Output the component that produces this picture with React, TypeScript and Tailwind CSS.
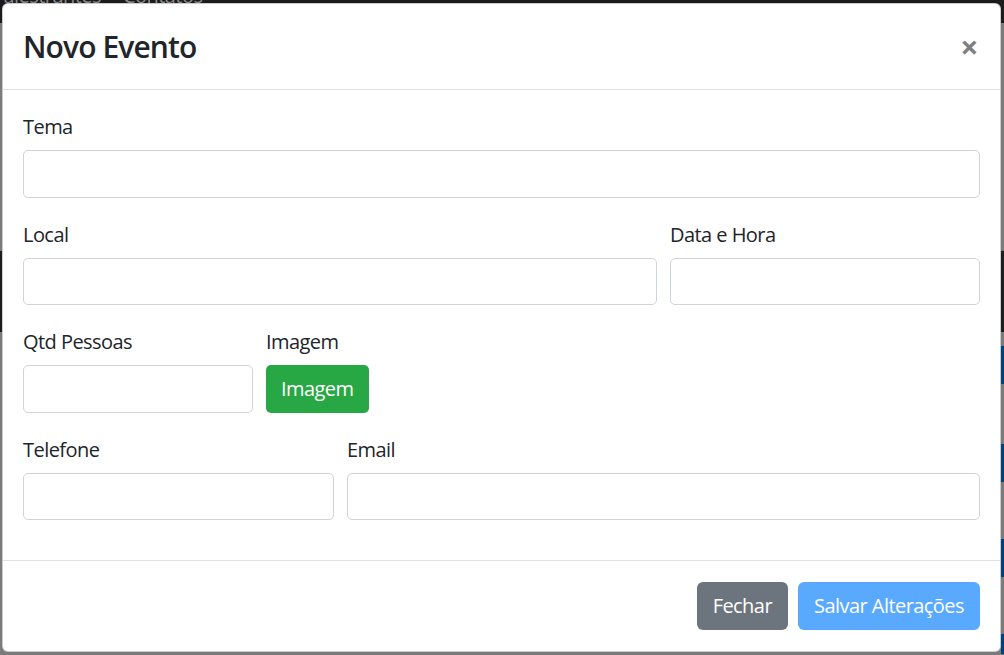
import React from "react";

function Field({ label, className }: { label: string; className?: string }) {
  return (
    <div className={className}>
      <label className="block pt-[2px] text-[20px] leading-[30px] mb-[8px] text-[#212529]">{label}</label>
      <div className="h-[47.5px] w-full border border-[#ced4da] rounded-[5px] bg-white"></div>
    </div>
  );
}

export default function App() {
  return (
    <main className="relative w-[1004px] h-[655px] overflow-hidden bg-[#7b7b7b] font-['Segoe_UI','Open_Sans',sans-serif] tracking-[-0.55px]">
      {/* page behind the backdrop */}
      <div className="flex flex-col">
        <div className="h-[37px] bg-[#1c1c1d] flex gap-[22px] -ml-[8px] text-[20px] leading-[20px] text-[#8a8a8a] -mt-[14px]">
          <span>Palestrantes</span>
          <span>Contatos</span>
        </div>
        <div className="h-[228px] bg-[#7b7b7b] border-b border-[#6e6e6e]"></div>
        <div className="h-[81px] bg-[#1c1d1f]"></div>
        <div className="h-[322px] flex">
          <div className="flex-1 bg-[#7b7b7b]"></div>
          <div className="w-[3px] flex flex-col">
            <div className="h-[14px] bg-[#7b7b7b]"></div>
            <div className="h-[38px] bg-[#00407f]"></div>
            <div className="h-[60px] bg-[#7b7b7b]"></div>
            <div className="h-[38px] bg-[#00407f]"></div>
            <div className="h-[57px] bg-[#7b7b7b]"></div>
            <div className="h-[38px] bg-[#00407f]"></div>
            <div className="h-[57px] bg-[#7b7b7b]"></div>
            <div className="h-[20px] bg-[#00407f]"></div>
          </div>
        </div>
      </div>

      {/* modal */}
      <div className="absolute left-[2px] top-[3px] w-[999px] h-[649px] bg-white rounded-[6px] border border-black/20 flex flex-col">
        <div className="h-[86px] flex items-center justify-between pl-[20px] pr-[22px] border-b border-[#dee2e6]">
          <h4 className="text-[30px] leading-[36px] font-semibold tracking-[-0.9px] text-[#212529]">Novo Evento</h4>
          <span className="text-[32px] leading-none font-bold text-black/50">×</span>
        </div>

        <div className="px-[20px] pt-[20px] pb-[20px] flex-1">
          <Field label="Tema" className="mb-[20px]" />
          <div className="flex gap-[13px] mb-[20px]">
            <Field label="Local" className="w-[634px]" />
            <Field label="Data e Hora" className="flex-1" />
          </div>
          <div className="flex gap-[13px] mb-[20px]">
            <Field label="Qtd Pessoas" className="w-[230px]" />
            <div>
              <label className="block pt-[2px] text-[20px] leading-[30px] mb-[8px] text-[#212529]">Imagem</label>
              <button className="h-[47.5px] px-[15px] rounded-[5px] bg-[#28a745] text-white text-[20px] leading-[30px]">
                Imagem
              </button>
            </div>
          </div>
          <div className="flex gap-[13px]">
            <Field label="Telefone" className="w-[311px]" />
            <Field label="Email" className="flex-1" />
          </div>
        </div>

        <div className="h-[91px] flex items-center justify-end gap-[10px] px-[20px] border-t border-[#dee2e6]">
          <button className="h-[48px] px-[16px] rounded-[6px] bg-[#6c757d] text-white text-[20px] leading-[30px]">
            Fechar
          </button>
          <button className="h-[48px] px-[16px] rounded-[6px] bg-[#59a9ff] text-white text-[20px] leading-[30px]">
            Salvar Alterações
          </button>
        </div>
      </div>
    </main>
  );
}
